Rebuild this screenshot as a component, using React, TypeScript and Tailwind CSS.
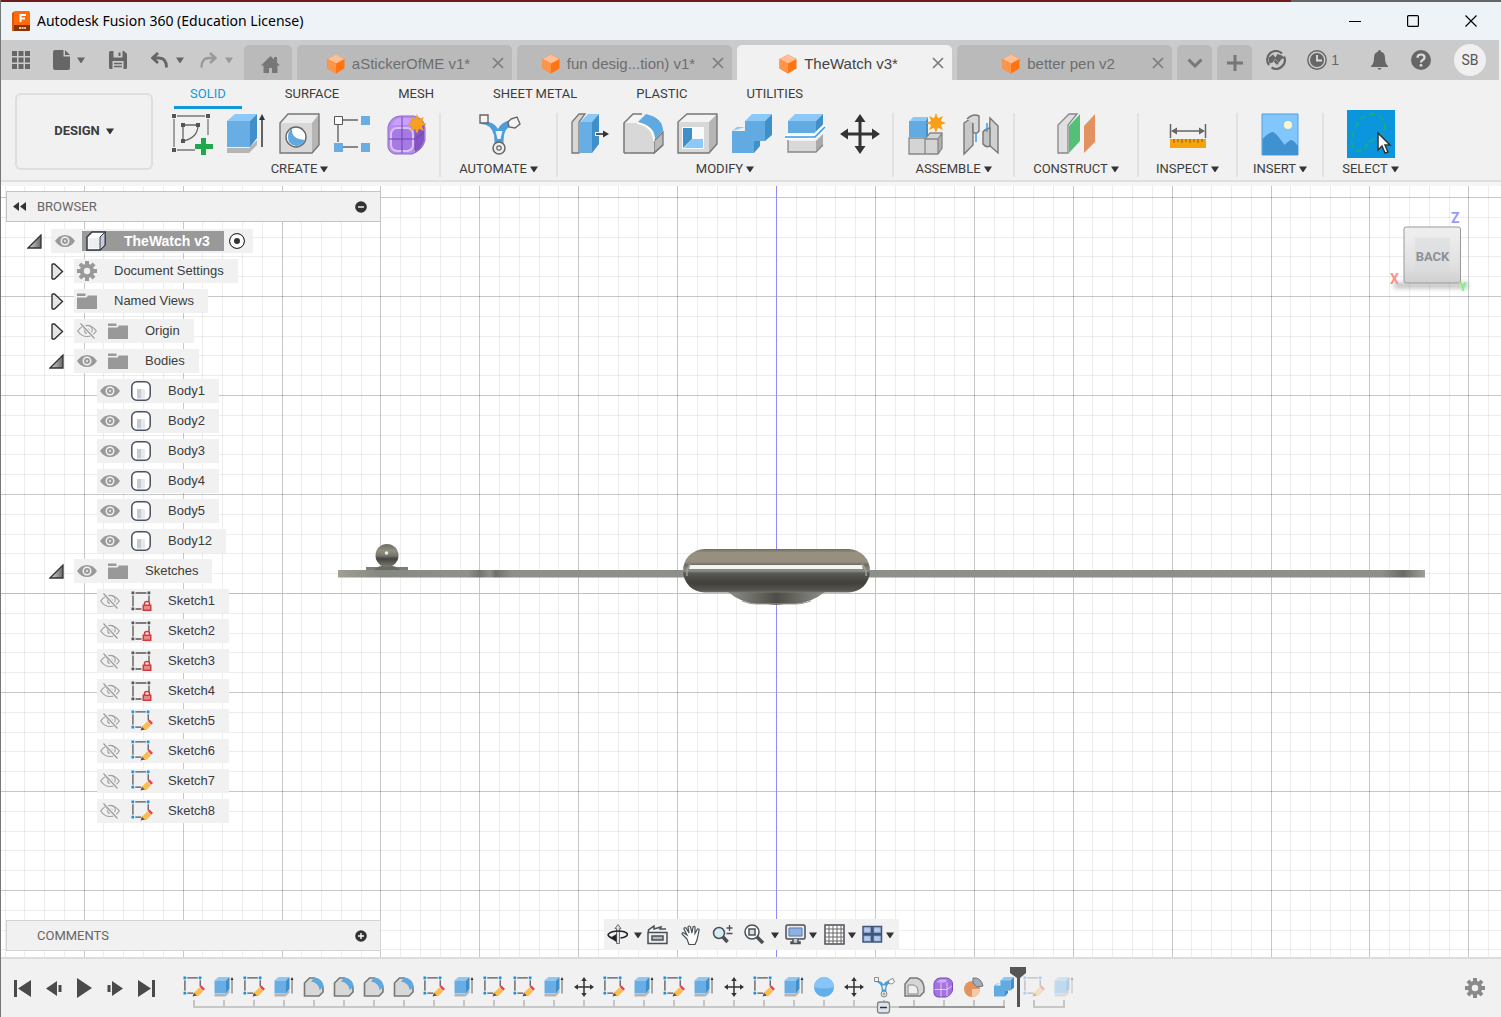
import React from "react";

type Kids = { children?: React.ReactNode };

function Svg({ w = 20, h = w, vb, className = "", children }: Kids & { w?: number; h?: number; vb?: string; className?: string }) {
  return (
    <svg width={w} height={h} viewBox={vb ?? `0 0 ${w} ${h}`} fill="none" className={`shrink-0 ${className}`} aria-hidden="true">
      {children}
    </svg>
  );
}

const Caret = ({ className = "text-[#333]" }: { className?: string }) => (
  <Svg w={8} h={8} className={className}>
    <path d="M0 1.500h8L4.400 7h-.8z" fill="currentColor" />
  </Svg>
);

/* ---------- title and tab bar ---------- */

const Logo = () => (
  <Svg w={18} h={20}>
    <path d="M0 2 2.500 0V20H0z" fill="#d85a10" />
    <rect x="2" width="16" height="20" rx="1.500" fill="#ff6b0b" />
    <path d="M2 14h16v4.500a1.500 1.500 0 0 1-1.500 1.500H2z" fill="#8a3200" />
    <path d="M8.500 11V4h5.500M8.500 7.500h4.500" stroke="#fff" strokeWidth="2" />
    <path d="M7 17h7" stroke="#e8c8b4" strokeWidth="2" strokeDasharray="2 .6" />
  </Svg>
);

const Cube = () => (
  <Svg w={18} h={20}>
    <path d="M9 .5 17.500 5v9.500L9 19.500.5 14.500V5z" fill="#ff7410" />
    <path d="M9 .5 17.500 5 9 9.500.5 5z" fill="#ffbe94" />
    <path d="M.5 5 9 9.500v10L.5 14.500z" fill="#ff954a" />
  </Svg>
);

const Cross = () => (
  <Svg w={12}>
    <path d="M1 1l10 10M11 1 1 11" stroke="#7a7a7a" strokeWidth="1.600" />
  </Svg>
);

function DocTab({ name, active }: { name: string; active?: boolean }) {
  return (
    <div className={`flex h-[35px] max-w-[215px] flex-1 items-center rounded-t-[5px] ${active ? "bg-[#f1f1f1] text-[#444]" : "bg-[#bababa] text-[#6e6e6e]"}`}>
      <button className="flex h-full flex-1 items-center justify-center gap-[7px] overflow-hidden pl-4 pt-[2px] text-[15px] leading-5 whitespace-nowrap">
        <Cube />
        {name}
      </button>
      <button aria-label={`Close ${name}`} className="flex w-7 justify-center">
        <Cross />
      </button>
    </div>
  );
}

function TitleBar() {
  return (
    <header className="flex h-[38px] items-center bg-[#eef3f8] pr-[1px] pl-[11px]">
      <Logo />
      <h1 className="ml-[7px] flex-1 font-['Noto_Sans',sans-serif] text-[14px] leading-5 text-black">Autodesk Fusion 360 (Education License)</h1>
      <button aria-label="Minimize" className="flex w-[58px] justify-center"><Svg w={12}><path d="M0 6.500h12" stroke="#000" /></Svg></button>
      <button aria-label="Maximize" className="flex w-[58px] justify-center"><Svg w={12}><rect x=".6" y=".6" width="10.800" height="10.800" rx="1" stroke="#000" strokeWidth="1.200" /></Svg></button>
      <button aria-label="Close" className="flex w-[58px] justify-center"><Svg w={12}><path d="M.5.5l11 11m0-11-11 11" stroke="#000" strokeWidth="1.200" /></Svg></button>
    </header>
  );
}

function TabBar() {
  return (
    <nav aria-label="Documents" className="mr-[2px] flex h-10 bg-[#cbcbcb] text-[#666]">
      <div className="flex w-[243px] shrink-0 items-center pl-[11px]">
        <button aria-label="Data panel"><Svg w={18}>
          {[0, 6.500, 13].map((x) => [0, 6.500, 13].map((y) => <rect key={`${x}-${y}`} x={x} y={y} width="5" height="5" fill="#666" />))}
        </Svg></button>
        <button aria-label="File" className="ml-[23px] flex items-center gap-[7px]">
          <Svg w={17} h={20}><path d="M0 2Q0 0 2 0h8.500v6.500H17V18q0 2-2 2H2q-2 0-2-2zM12 0l5 5h-5z" fill="#666" /></Svg>
          <Caret className="text-[#666]" />
        </button>
        <button aria-label="Save" className="ml-[24px]">
          <Svg w={18}><path d="M0 1.500Q0 0 1.500 0H15l3 3v13.500q0 1.500-1.500 1.500h-15Q0 18 0 16.500z" fill="#666" /><path d="M4.500 0h9v6.500h-9zM3.500 10h11v8h-11z" fill="#cbcbcb" /><path d="M9.500 1.500h2V5h-2z" fill="#666" /><path d="M5 12.500h8M5 15.500h8" stroke="#666" strokeWidth="1.500" /></Svg>
        </button>
        <button aria-label="Undo" className="ml-[24px] flex items-center gap-[7px]">
          <Svg w={18} h={16}><path d="M7 1 1.500 6 7 11M2 6h6q7.500 0 7.500 9.500" stroke="#666" strokeWidth="2.800" /></Svg>
          <Caret className="text-[#666]" />
        </button>
        <button aria-label="Redo" className="ml-[15px] flex items-center gap-[8px]">
          <Svg w={18} h={16}><path d="M11 1l5.500 5-5.500 5M16 6h-6q-7.500 0-7.500 9.500" stroke="#999" strokeWidth="2.400" /></Svg>
          <Caret className="text-[#999]" />
        </button>
      </div>
      <div className="flex min-w-0 flex-1 items-end gap-[5px]">
        <button aria-label="Home" className="flex h-[35px] w-12 items-center justify-center rounded-t-[5px] bg-[#bababa] pl-1 pt-1">
          <Svg w={19} h={18}><path d="M9.500 0 13 3.500V1h3v5.500L19 9.500h-2.500V17H11v-5H8v5H2.500V9.500H0z" fill="#777" /></Svg>
        </button>
        <DocTab name="aStickerOfME v1*" />
        <DocTab name="fun desig...tion) v1*" />
        <DocTab name="TheWatch v3*" active />
        <DocTab name="better pen v2" />
        <button aria-label="More tabs" className="flex h-[35px] w-[35px] items-center justify-center rounded-t-[5px] bg-[#bababa]">
          <Svg w={16} h={10}><path d="M1.500 1.500 8 8l6.500-6.500" stroke="#777" strokeWidth="3" /></Svg>
        </button>
        <button aria-label="New tab" className="flex h-[35px] w-[35px] items-center justify-center rounded-t-[5px] bg-[#bababa]">
          <Svg w={16}><path d="M8 0v16M0 8h16" stroke="#777" strokeWidth="3" /></Svg>
        </button>
      </div>
      <div className="flex shrink-0 items-center pr-[13px]">
        <button aria-label="Extensions">
          <Svg w={20}><path d="M3 15A8.700 8.700 0 0 1 16 3.500M18 6.500A8.700 8.700 0 0 1 5.500 17.500" stroke="#666" strokeWidth="2.200" /><path d="M2.500 8 7 4.500l2.500 3 2-3.500L16 5.500 18.500 8l-3 1-2.500 3.500L9 9 6.500 12.500l-3 1z" fill="#666" /><path d="M8.500 10.500 12 14" stroke="#666" strokeWidth="2.500" /></Svg>
        </button>
        <button aria-label="Job status" className="ml-[21px] flex items-center gap-1 text-[14px] leading-5 text-[#666]">
          <Svg w={20}><circle cx="10" cy="10" r="9.200" stroke="#666" strokeWidth="1.400" /><circle cx="10" cy="10" r="7" fill="#666" /><path d="M10 5v5.500h5" stroke="#ddd" strokeWidth="1.800" /></Svg>
          1
        </button>
        <button aria-label="Notifications" className="ml-[32px]">
          <Svg w={17} h={20}><path d="M8.500 0Q10 0 10 1.800q4 1 4 6.200 0 6 3 8v1H0v-1q3-2 3-8 0-5.200 4-6.200Q7 0 8.500 0zM6.500 18h4q-.5 1.800-2 1.800T6.500 18z" fill="#666" /></Svg>
        </button>
        <button aria-label="Help" className="ml-[23px]">
          <Svg w={20}><circle cx="10" cy="10" r="10" fill="#666" /><path d="M6.500 7.800Q6.500 4.500 10 4.500t3.500 3Q13.500 9 11.700 10 10 11 10 12.500" stroke="#ddd" strokeWidth="2.200" /><circle cx="10" cy="15.300" r="1.400" fill="#ddd" /></Svg>
        </button>
        <button className="ml-[23px] h-8 w-8 rounded-full bg-[#f0f0f0] font-[Roboto] text-[14px] leading-5 text-[#555]">SB</button>
      </div>
    </nav>
  );
}

/* ---------- ribbon icons, drawn on a 44 x 44 box ---------- */

const Star = ({ x, y }: { x: number; y: number }) => (
  <path transform={`translate(${x} ${y})`} d="M0-10 2-4.800 7-7 4.800-2 10 0 4.800 2 7 7 2 4.800 0 10-2 4.800-7 7-4.800 2-10 0-4.800-2-7-7-2-4.800z" fill="#f9a01b" />
);

const SketchCreate = () => (
  <g>
    <path d="M7 4h28M4 7v28M7 38h18M38 7v16" stroke="#777" strokeWidth="1.300" />
    <path d="M13 13h15M13 13v16M28 13q0 13-15 16" stroke="#666" strokeWidth="1.300" />
    <path d="M2 2h4v4H2zM36 2h4v4h-4zM2 36h4v4H2zM11 11h4v4h-4zM26 11h4v4h-4zM11 27h4v4h-4z" fill="#555" />
    <path d="M31 26h5v6h7v5h-7v6h-5v-6h-6v-5h6z" fill="#22a84c" />
  </g>
);

const Extrude = () => (
  <g>
    <path d="M3 41v-5h22l8-8v5l-8 8z" fill="#b5b5b5" />
    <path d="M3 9 11 2h22l-7 7z" fill="#8cc8f8" />
    <path d="M3 9h23v26H3z" fill="#68aee4" />
    <path d="M26 9 33 2v24l-7 9z" fill="#3f8fcb" />
    <path d="M38 35V5" stroke="#333" strokeWidth="1.500" />
    <path d="M35 8l3-6 3 6z" fill="#333" />
  </g>
);

const Hole = () => (
  <g>
    <path d="M2 11 10 2h31l-7 9z" fill="#eee" />
    <path d="M34 11 41 2v31l-7 8z" fill="#b5b5b5" />
    <path d="M2 11h32v30H2z" fill="#d8d8d8" />
    <path d="M2 11 10 2h31v31l-7 8H2z" stroke="#777" strokeWidth="1.400" />
    <circle cx="18" cy="25" r="10" fill="#fff" stroke="#666" strokeWidth="1.400" />
    <path d="M14 17q-1 10 13 11-3 6-9 6-8-1-8-9 0-6 4-8z" fill="#5ea9e0" />
  </g>
);

const Pattern = () => (
  <g>
    <path d="M10 8h16M6 12v18M10 35h16" stroke="#666" strokeWidth="1.400" />
    <path d="M2.500 4.500h8v8h-8z" stroke="#555" fill="#fafafa" />
    <path d="M29 4h9v9h-9zM2 31h9v9H2zM29 31h9v9h-9z" fill="#68aee4" />
  </g>
);

const FormBody = () => (
  <g>
    <path d="M2 15Q4 5 14 4h14q11 3 11 12v12q-2 10-13 14H9q-7-2-7-8z" fill="#b78cf0" />
    <path d="M14 6h12l-4 7H6q2-6 8-7z" fill="#c9a0ff" />
    <path d="M30 15l8-5v18q-2 9-9 12z" fill="#8453c4" />
    <rect x="5" y="16" width="22" height="23" rx="6" fill="#a679e4" stroke="#d9c2fc" strokeWidth="2" />
    <path d="M16 5v36M3 27h26l9-7M29 14v24" stroke="#6f43aa" />
    <path d="M2 15Q4 5 14 4h14q11 3 11 12v12q-2 10-13 14H9q-7-2-7-8z" stroke="#8d68bf" />
    <Star x={31} y={12} />
  </g>
);

const Automate = () => (
  <g>
    <path d="M4 10q12-2 17 7 4-8 14-9l3 5q-9 1-11 10l-1 13h-8l-1-13Q14 12 4 12z" fill="#4d9ddb" />
    <path d="M18.500 19h7l-2 8h-3z" fill="#e8f3fc" />
    <path d="M3 3h8v8H3z" fill="#f4f4f4" stroke="#666" strokeWidth="1.400" />
    <path d="M34 7l6-2 3 7-5 4-6-1-1-5z" fill="#f4f4f4" stroke="#666" strokeWidth="1.400" />
    <circle cx="22" cy="36" r="6" fill="#eee" stroke="#666" strokeWidth="1.500" />
    <circle cx="22" cy="36" r="2.200" stroke="#666" strokeWidth="1.200" />
  </g>
);

const PressPull = () => (
  <g>
    <path d="M4 41V10l7-8h6l-6 8v31z" fill="#d8d8d8" stroke="#777" strokeWidth="1.300" />
    <path d="M12 10 20 2h11l-7 8z" fill="#8cc8f8" />
    <path d="M12 10h12v31H12z" fill="#68aee4" />
    <path d="M24 10 31 2v30l-7 9z" fill="#3f8fcb" />
    <path d="M27 22h9" stroke="#f1f1f1" strokeWidth="4" />
    <path d="M28 22h8" stroke="#333" strokeWidth="1.600" />
    <path d="M35 18.500l6 3.500-6 3.500z" fill="#333" />
  </g>
);

const Fillet = () => (
  <g>
    <path d="M32 29l9-9v13l-9 8z" fill="#bbb" stroke="#777" strokeWidth="1.300" />
    <path d="M2 11 11 2h9l-6 9z" fill="#f5f5f5" />
    <path d="M2 41V11h12q16 2 18 18v12z" fill="#d8d8d8" />
    <path d="M2 41V11l9-9h9" stroke="#777" strokeWidth="1.500" />
    <path d="M2 41h30l9-8" stroke="#777" strokeWidth="1.300" />
    <path d="M16 10 24 2q17 4 17 17l-8 8q0-13-17-17z" fill="#5ea9e0" />
    <path d="M15 11q16 3 17 18" stroke="#fff" strokeWidth="1.500" />
  </g>
);

const Shell = () => (
  <g>
    <path d="M2 10 11 2h30l-8 8z" fill="#f3f3f3" />
    <path d="M33 10 41 2v30l-8 9z" fill="#b5b5b5" />
    <path d="M2 10h31v31H2z" fill="#d8d8d8" />
    <path d="M2 10 11 2h30v30l-8 9H2z" stroke="#777" strokeWidth="1.400" />
    <path d="M6 15h22v22H6z" fill="#fafafa" />
    <path d="M7 16h9v11l-9 9z" fill="#3f8fcb" />
    <path d="M16 27h11v9H8z" fill="#8cc8f8" />
  </g>
);

const Combine = () => (
  <g>
    <path d="M2 19 7 15h8V9l7-7h20l-7 7z" fill="#8cc8f8" />
    <path d="M2 19h13V9h20v20H24v12H2z" fill="#62abe2" />
    <path d="M35 9 42 2v21l-7 6zM24 29h6v5l-6 7z" fill="#3f8fcb" />
  </g>
);

const Split = () => (
  <g>
    <path d="M4 9 11 2h28l-7 7z" fill="#8cc8f8" />
    <path d="M4 9h28v12H4z" fill="#62abe2" />
    <path d="M32 9 39 2v12l-7 7z" fill="#3f8fcb" />
    <path d="M4 29h28v11H4z" fill="#d8d8d8" />
    <path d="M32 29l7-7v11l-7 7z" fill="#aaa" />
    <path d="M4 28v12h28l7-7" stroke="#888" strokeWidth="1.300" />
    <path d="M1 25h29L41 14" stroke="#fff" strokeWidth="5" />
    <path d="M1 25h30L41 15" stroke="#3d9be8" strokeWidth="1.700" />
  </g>
);

const Move = () => (
  <g>
    <path d="M22 8v28M8 22h28" stroke="#333" strokeWidth="3" />
    <path d="M22 2l5.500 8h-11zM22 42l5.500-8h-11zM2 22l8-5.500v11zM42 22l-8-5.500v11z" fill="#333" />
  </g>
);

const NewComponent = () => (
  <g>
    <path d="M4 26h16l4-5h13v15l-5 6H4z" fill="#d4d4d4" />
    <path d="M33 27l4-5v14l-4 5z" fill="#b0b0b0" />
    <path d="M4 42V26h16v16zM20 27l5-6h12v15l-4 6H20M20 27h13v15M33 27l4-6" stroke="#888" strokeWidth="1.300" />
    <path d="M4 10 8 5h15l-2 5z" fill="#8cc8f8" />
    <path d="M4 9h17v16H4z" fill="#62abe2" />
    <path d="M21 9l2-4v18l-2 2z" fill="#3f8fcb" />
    <Star x={31} y={11} />
  </g>
);

const Joint = () => (
  <g stroke="#777" strokeWidth="1.400">
    <path d="M5 11 14 5v28l-9 9z" fill="#c8c8c8" />
    <path d="M8 7q6-6 12-3v15q-3 4-6 1V11" fill="#d8d8d8" />
    <path d="M31 6l8 8v27L30 33z" fill="#d0d0d0" />
    <path d="M31 16q-5 1-7 4v12q3 4 7 2z" fill="#c4c4c4" />
    <path d="M17 21v9M28 11v9" stroke="#3d9be8" strokeWidth="1.500" />
  </g>
);

const Construct = () => (
  <g>
    <path d="M4 41V13L15 2h8L14 13v28z" fill="#e0e0e0" stroke="#888" strokeWidth="1.300" />
    <path d="M15 14 26 2v27L15 41z" fill="#55bf78" />
    <path d="M30 14 41 2v28L30 41z" fill="#e3925f" />
  </g>
);

const Measure = () => (
  <g>
    <path d="M4.500 12v14M39.500 12v14M8 19h28" stroke="#666" strokeWidth="1.500" />
    <path d="M5 19l6-3.500v7zM39 19l-6-3.500v7z" fill="#666" />
    <path d="M4 27h36v9H4z" fill="#f7a30c" />
    <path d="M8 27v4M12 27v3M16 27v4M20 27v3M24 27v4M28 27v3M32 27v4M36 27v3" stroke="#8a5a00" />
  </g>
);

const InsertImage = () => (
  <g>
    <path d="M4 2h36v41H4z" fill="#82c6fb" stroke="#4fa0de" />
    <circle cx="30" cy="13" r="4" fill="#fdf7cb" />
    <path d="M4.500 27q7-7 10-7t12 13q5-5 7-5t6.500 6v9H4.500z" fill="#3f92cf" />
  </g>
);

const SelectTool = () => (
  <Svg w={48}>
    <path d="M0 0h48v48H0z" fill="#0a95dc" />
    <path d="M22 32Q32 27 36 23 42 10 29 5 19 1 10 14 2 30 6 38 14 47 22 32z" stroke="#19b36b" strokeWidth="1.500" strokeDasharray="6 4" />
    <path d="M31 23v17l4-4 3 7 3-1-3-7h5z" fill="#fff" stroke="#333" strokeWidth="1.500" />
  </Svg>
);

type Tool = { label: string; icon: React.ReactNode };

function Group({ name, tools, className }: { name: string; tools: Tool[]; className: string }) {
  return (
    <section aria-label={name} className={`flex h-[64px] flex-col items-center border-r-2 border-[#e2e2e2] last:border-r-0 ${className}`}>
      <div className="-mt-[3px] flex h-12 shrink-0 items-center gap-[10px]">
        {tools.map((t) => (
          <button key={t.label} aria-label={t.label}>
            {t.label === "Select" ? t.icon : <Svg w={44}>{t.icon}</Svg>}
          </button>
        ))}
      </div>
      <button className="mt-[1px] flex shrink-0 items-center gap-[3px] text-[13px] leading-5">
        {name}
        <Caret />
      </button>
    </section>
  );
}

const ribbonTabs = ["SOLID", "SURFACE", "MESH", "SHEET METAL", "PLASTIC", "UTILITIES"];

function Ribbon() {
  return (
    <div className="flex border-b-4 border-[#f5f5f5] bg-[#f1f1f1] font-[Roboto] text-[#3c3c3c]">
      <div className="flex flex-1 border-b-2 border-[#dfdfdf] pb-[3px]">
        <button className="mt-[13px] ml-[14px] flex h-[77px] w-[138px] items-center justify-center gap-[6px] rounded-md border-2 border-[#dedede] pb-[2px] text-[13px] leading-5 font-bold">
          DESIGN
          <Caret />
        </button>
        <div className="ml-[7px]">
          <div role="tablist" className="flex gap-[27px] pl-[14px]">
            {ribbonTabs.map((t, i) => (
              <button
                key={t}
                role="tab"
                aria-selected={i === 0}
                className={`h-[29px] border-b-[3px] px-4 pt-[2px] text-[13px] leading-5 ${i === 0 ? "border-[#1299dc] text-[#1299dc]" : "border-transparent"}`}
              >
                {t}
              </button>
            ))}
          </div>
          <div className="mt-1 flex">
            <Group name="CREATE" className="w-[281px]" tools={[
              { label: "Create sketch", icon: <SketchCreate /> },
              { label: "Extrude", icon: <Extrude /> },
              { label: "Hole", icon: <Hole /> },
              { label: "Pattern", icon: <Pattern /> },
              { label: "Create form", icon: <FormBody /> },
            ]} />
            <Group name="AUTOMATE" className="w-[117px]" tools={[{ label: "Automated modeling", icon: <Automate /> }]} />
            <Group name="MODIFY" className="w-[336px]" tools={[
              { label: "Press pull", icon: <PressPull /> },
              { label: "Fillet", icon: <Fillet /> },
              { label: "Shell", icon: <Shell /> },
              { label: "Combine", icon: <Combine /> },
              { label: "Split body", icon: <Split /> },
              { label: "Move", icon: <Move /> },
            ]} />
            <Group name="ASSEMBLE" className="w-[121px]" tools={[
              { label: "New component", icon: <NewComponent /> },
              { label: "Joint", icon: <Joint /> },
            ]} />
            <Group name="CONSTRUCT" className="w-[124px]" tools={[{ label: "Offset plane", icon: <Construct /> }]} />
            <Group name="INSPECT" className="w-[99px]" tools={[{ label: "Measure", icon: <Measure /> }]} />
            <Group name="INSERT" className="w-[86px]" tools={[{ label: "Insert image", icon: <InsertImage /> }]} />
            <Group name="SELECT" className="w-[93px]" tools={[{ label: "Select", icon: <SelectTool /> }]} />
          </div>
        </div>
      </div>
    </div>
  );
}

/* ---------- canvas drawing ---------- */

function Model() {
  const xs = Array.from({ length: 77 }, (_, i) => i - 40);
  const ys = Array.from({ length: 42 }, (_, i) => i - 22);
  return (
    <svg className="absolute inset-0 h-full w-full" viewBox="1 186 1500 771" preserveAspectRatio="xMidYMid slice" role="img" aria-label="Back view of the watch model">
      <defs>
        <linearGradient id="case" x1="0" y1="0" x2="0" y2="1">
          <stop offset="0" stopColor="#6d6a62" />
          <stop offset=".08" stopColor="#97907f" />
          <stop offset=".3" stopColor="#979082" />
          <stop offset=".36" stopColor="#6f6d68" />
          <stop offset=".5" stopColor="#8b8f8b" />
          <stop offset=".56" stopColor="#5a5954" />
          <stop offset=".78" stopColor="#403f39" />
          <stop offset=".95" stopColor="#57554e" />
          <stop offset="1" stopColor="#77766d" />
        </linearGradient>
        <linearGradient id="lens" x1="0" y1="0" x2="1" y2="0">
          <stop offset="0" stopColor="#8f8f88" />
          <stop offset=".5" stopColor="#4d4c48" />
          <stop offset="1" stopColor="#8f8f88" />
        </linearGradient>
        <linearGradient id="band" x1="0" y1="0" x2="1" y2="0">
          <stop offset="0" stopColor="#a19f96" />
          <stop offset=".04" stopColor="#858780" />
          <stop offset=".1" stopColor="#8d908a" />
          <stop offset=".12" stopColor="#8d908a" />
          <stop offset=".13" stopColor="#73746e" />
          <stop offset=".14" stopColor="#8d908a" />
          <stop offset=".145" stopColor="#6e6f69" />
          <stop offset=".16" stopColor="#8d908a" />
          <stop offset=".96" stopColor="#8d908a" />
          <stop offset=".98" stopColor="#6b6b66" />
          <stop offset="1" stopColor="#a19f96" />
        </linearGradient>
        <linearGradient id="knob" x1="0" y1="0" x2="0" y2="1">
          <stop offset="0" stopColor="#6f6c62" />
          <stop offset=".3" stopColor="#928e80" />
          <stop offset=".5" stopColor="#77766e" />
          <stop offset=".65" stopColor="#45443f" />
          <stop offset="1" stopColor="#7d7b72" />
        </linearGradient>
      </defs>
      <path d="M1 186h1500v771H1z" fill="#fff" />
      <g stroke="#000">
        {xs.map((k) => <path key={k} d={`M${Math.round(776 + k * 19.78) + 0.5} 186V957`} strokeOpacity={k % 5 === 0 ? 0.22 : 0.07} />)}
        {ys.map((k) => <path key={k} d={`M1 ${Math.round(593 + k * 19.8) + 0.5}H1501`} strokeOpacity={k % 5 === 0 ? 0.22 : 0.07} />)}
      </g>
      <path d="M1 593.500h1500" stroke="#f7a5a5" />
      <path d="M776.500 186v771" stroke="#8d8df5" />
      <path d="M338 570h1087v7.500H338z" fill="url(#band)" />
      <path d="M366 567h42v3h-42z" fill="#7c7d75" />
      <path d="M374 570q4-4 8-4h10q4 0 8 4z" fill="#696a62" />
      <circle cx="387" cy="555.500" r="11.500" fill="url(#knob)" />
      <circle cx="386.500" cy="553" r="1.800" fill="#eee" />
      <path d="M728 592h97q-13 10-29 12h-12q-8 2-16 0h-12q-16-2-28-12z" fill="url(#lens)" />
      <path d="M742 601q6 2.500 14 3h40q8-.5 15-3" stroke="#a3a196" strokeWidth="1.200" fill="none" />
      <rect x="683" y="549" width="187" height="43.500" rx="21.700" fill="url(#case)" />
      <path d="M690 565h172l1 4H689z" fill="#f4f4f2" />
      <path d="M690 564q-4 6-3 12M862 564q5 6 4 12" stroke="#a49e90" strokeWidth="1.500" fill="none" />
    </svg>
  );
}

function ViewCube() {
  return (
    <svg width="90" height="90" viewBox="1385 207 90 90" className="absolute top-[21px] right-[26px]" role="img" aria-label="View cube, back">
      <defs>
        <linearGradient id="cubeface" x1="0" y1="0" x2="0" y2="1"><stop offset="0" stopColor="#f0f0f0" /><stop offset=".7" stopColor="#e0e0e0" /><stop offset="1" stopColor="#cfcfcf" /></linearGradient>
        <filter id="shade" x="-20%" y="-200%" width="140%" height="500%"><feGaussianBlur stdDeviation="2.500" /></filter>
      </defs>
      <path d="M1394 283h74v5h-74z" fill="#888" opacity=".6" filter="url(#shade)" />
      <rect x="1404" y="227" width="56.500" height="56" rx="2" fill="url(#cubeface)" stroke="#999" />
      <path d="M1415 238h35v35h-35z" fill="#d5d9de" opacity=".5" />
      <text x="1432.500" y="261" textAnchor="middle" fontFamily="Roboto" fontWeight="700" fontSize="13" fill="#8d9197">BACK</text>
      <g fontFamily="Roboto" fontSize="14" fontWeight="700">
        <text x="1451" y="223" fill="#9a9af8">Z</text>
        <text x="1390" y="284" fill="#ff8f8f">X</text>
        <text x="1459" y="291" fill="#7df57d" fontSize="12">Y</text>
      </g>
    </svg>
  );
}

/* ---------- browser tree ---------- */

const Eye = () => (
  <Svg w={20} h={14}><path d="M0 7Q4 1 10 1t10 6q-4 6-10 6T0 7z" fill="#999" /><circle cx="10" cy="7" r="4.500" fill="#f1f1f1" /><circle cx="10" cy="7" r="3" fill="#999" /><circle cx="10" cy="7" r="1.200" fill="#ddd" /></Svg>
);
const EyeOff = () => (
  <Svg w={20} h={16}><path d="M.7 8Q4.500 2.500 10 2.500T19.300 8q-3.800 5.500-9.300 5.500T.7 8z" stroke="#a0a0a0" strokeWidth="1.200" /><path d="M13.500 10.500a4.500 4.500 0 1 0-7-5M12.300 8a2.300 2.300 0 1 0-2.300 2.300" stroke="#a0a0a0" strokeWidth="1.100" /><path d="M4 0l14 15.500" stroke="#f1f1f1" strokeWidth="3" /><path d="M3.500.5 17.500 15.500" stroke="#999" strokeWidth="1.100" /></Svg>
);
const Folder = () => (
  <Svg w={20} h={17}><path d="M0 4.500h9.500l1.500-2h9V16H0z" fill="#999" /><path d="M0 .5h8.500v2.500H0z" fill="#999" /></Svg>
);
const Gear = ({ fill = "#999" }: { fill?: string }) => (
  <Svg w={20}>
    <g stroke={fill} strokeWidth="4">{[0, 45, 90, 135].map((a) => <path key={a} d="M10 0v20" transform={`rotate(${a} 10 10)`} />)}</g>
    <circle cx="10" cy="10" r="7.200" fill={fill} /><circle cx="10" cy="10" r="3.200" fill="#f1f1f1" />
  </Svg>
);
const Body = () => (
  <Svg w={20}><rect x=".8" y=".8" width="18.400" height="18.400" rx="5" fill="#fff" stroke="#4a5160" strokeWidth="1.500" /><path d="M6 8h4.500v9.500H6z" fill="#c5cad3" /><path d="M10.500 8H14v9.500h-3.500z" fill="#e6e8ee" /></Svg>
);
const SketchBox = ({ dot }: { dot: string }) => (
  <g><path d="M2 4.500v11M4.500 2h11M18 4.500V11M4.500 18h6" stroke="#555" strokeWidth="1.300" /><path d="M.5.5h2.800v2.800H.5zM16.500.5h2.800v2.800h-2.800zM.5 16.500h2.800v2.800H.5z" fill={dot} /></g>
);
const SketchLocked = () => (
  <Svg w={22} h={20}><SketchBox dot="#555" /><path d="M13.500 14v-1.500q0-2 2.500-2t2.500 2V14" stroke="#d23a3a" strokeWidth="1.500" /><path d="M11.500 13.500h9V20h-9z" fill="#d23a3a" /><path d="M13 15h6v3.500h-6z" fill="#e78c8c" /></Svg>
);
const Pencil = () => (
  <g><path d="M10 21.500l1.500-4.500 3.500 3.500z" fill="#555" /><path d="M11.500 17.500l5.500-5.500 4 4-5.500 5.500z" fill="#fbbd4a" /><path d="M17.500 11.500l2-1.500 3.500 3.500-2 2z" fill="#f0404f" /></g>
);
const SketchEdit = () => (
  <Svg w={22} h={22} vb="0 0 23 23"><SketchBox dot="#1c8fe3" /><Pencil /></Svg>
);

type Node = { name: string; level: 1 | 2; arrow?: "open" | "closed"; eye?: "on" | "off"; icon: React.ReactNode };

const nodes: Node[] = [
  { name: "Document Settings", level: 1, arrow: "closed", icon: <Gear /> },
  { name: "Named Views", level: 1, arrow: "closed", icon: <Folder /> },
  { name: "Origin", level: 1, arrow: "closed", eye: "off", icon: <Folder /> },
  { name: "Bodies", level: 1, arrow: "open", eye: "on", icon: <Folder /> },
  ...["Body1", "Body2", "Body3", "Body4", "Body5", "Body12"].map((name): Node => ({ name, level: 2, eye: "on", icon: <Body /> })),
  { name: "Sketches", level: 1, arrow: "open", eye: "on", icon: <Folder /> },
  ...[1, 2, 3, 4].map((n): Node => ({ name: `Sketch${n}`, level: 2, eye: "off", icon: <SketchLocked /> })),
  ...[5, 6, 7, 8].map((n): Node => ({ name: `Sketch${n}`, level: 2, eye: "off", icon: <SketchEdit /> })),
];

const OpenArrow = () => (
  <Svg w={15}><defs><linearGradient id="open" x1="0" y1="0" x2="1" y2="0"><stop offset="0" stopColor="#ddd" /><stop offset="1" stopColor="#666" /></linearGradient></defs><path d="M14 1v13H1z" fill="url(#open)" stroke="#333" strokeWidth="1.300" /></Svg>
);
const ClosedArrow = () => (
  <Svg w={13} h={17}><path d="M1 1.500Q1 1 2 1h1.500l8 7.500-8 7.500H2q-1 0-1-.5z" fill="#e5e5e5" stroke="#333" strokeWidth="1.400" /></Svg>
);

function Tree() {
  return (
    <ul className="mt-[7px] flex flex-col gap-[6px] text-[13px] leading-5 text-[#3c3c3c]">
      <li className="flex h-6 items-center pl-[26px]">
        <button aria-label="Collapse TheWatch v3"><OpenArrow /></button>
        <div className="ml-[9px] flex h-6 items-center bg-[#f1f1f1] pr-2 pl-1">
          <button aria-label="Hide TheWatch v3"><Eye /></button>
          <button className="ml-[7px] flex h-5 items-center bg-[#999] pr-[14px] pl-1 text-[14px] font-bold text-white">
            <Svg w={20}><path d="M1 6 6 1h13v13l-5 5H1z" fill="#fff" stroke="#333a48" strokeWidth="1.500" /><path d="M14 6l5-5v13l-5 5z" fill="#c9ccd4" stroke="#333a48" /><path d="M2.500 7h10.500v10.500H2.500z" fill="#eceef2" /></Svg>
            <span className="ml-[18px]">TheWatch v3</span>
          </button>
          <input type="radio" name="component" aria-label="Activate TheWatch v3" defaultChecked className="ml-[5px] h-4 w-4 appearance-none rounded-full border border-[#333] bg-[#333] shadow-[inset_0_0_0_4px_#fff]" />
        </div>
      </li>
      {nodes.map((n) => (
        <li key={n.name} className={`flex h-6 items-center ${n.level === 1 ? "pl-[48px]" : "pl-[96px]"}`}>
          {n.arrow && (
            <button aria-label={`Toggle ${n.name}`} className="flex w-[25px] shrink-0">
              {n.arrow === "open" ? <OpenArrow /> : <span className="pl-[2px]"><ClosedArrow /></span>}
            </button>
          )}
          <div className="flex h-6 items-center gap-[11px] bg-[#f1f1f1] pr-[14px] pl-[3px]">
            {n.eye && <button aria-label={`Visibility of ${n.name}`}>{n.eye === "on" ? <Eye /> : <EyeOff />}</button>}
            <span className="flex w-5">{n.icon}</span>
            <span className="ml-[6px]">{n.name}</span>
          </div>
        </li>
      ))}
    </ul>
  );
}

/* ---------- navigation bar ---------- */

function NavBar() {
  const s = { stroke: "#4a5058", strokeWidth: 1.5 };
  return (
    <div role="toolbar" aria-label="Navigation" className="absolute bottom-[7px] left-1/2 flex h-[31px] w-[295px] -translate-x-[147px] items-center bg-[#f1f1f1] px-[3px]">
      <button aria-label="Orbit" className="flex items-center gap-[6px]"><Svg w={21}><path d="M9.500 4.500H8L11 .5l3 4h-1.500v15h-3z" fill="#ddd" stroke="#6a7078" /><path d="M5 14Q0 12 1.500 10q3-3 10-3t9 3q0 3-7 4" stroke="#222" strokeWidth="1.600" /><path d="M9.500 10v8L3 14z" fill="#222" /></Svg><Caret /></button>
      <button aria-label="Look at" className="ml-[5px]"><Svg w={22} h={20}><path d="M1 7.500h19v11H1z" fill="#eee" {...s} /><path d="M5 11h11v4H5z" fill="#bbb" {...s} /><path d="M1.500 7V5L7 1v3l7-2-1 2h6" {...s} /></Svg></button>
      <button aria-label="Pan" className="ml-[12px]"><Svg w={20}><path d="M6 14 1 9q0-2 2-1l3 2-3-6q0-2 2-1l3 5-1-6q1-2 2.500 0L11 8l1-6q1.500-1.500 2 0v6.500L16.500 4q2-.5 1.500 1.500L16 15l-2 4.500H8z" fill="#fff" stroke="#4a5058" strokeWidth="1.200" /></Svg></button>
      <button aria-label="Zoom" className="ml-[11px]"><Svg w={21}><circle cx="7" cy="9" r="5.500" fill="#d5ecf0" {...s} /><path d="M11 13l4.500 5" stroke="#4a5058" strokeWidth="3.500" /><path d="M17.500 1v6M14.500 4h6M14.500 9.500h6" stroke="#4a5058" strokeWidth="1.300" /></Svg></button>
      <button aria-label="Fit" className="ml-[11px] flex items-center gap-[6px]"><Svg w={21}><circle cx="8" cy="8" r="7" fill="#fafafa" {...s} /><path d="M5 5h6v6H5z" fill="#ddd" {...s} /><path d="M13 13l6 6" stroke="#4a5058" strokeWidth="3.500" /></Svg><Caret /></button>
      <button aria-label="Display settings" className="ml-[6px] flex items-center gap-[3px]"><Svg w={21}><rect x="1" y="1" width="19" height="14" rx="1.500" fill="#e8e8e8" {...s} /><path d="M4 4h13v8H4z" fill="#8db1e0" stroke="#5a7fb0" /><path d="M8 15v3H6v1.500h9V18h-2v-3" fill="#ccc" {...s} /></Svg><Caret /></button>
      <button aria-label="Grid and snaps" className="ml-[7px] flex items-center gap-[3px]"><Svg w={21}><path d="M1 1h19v19H1z" fill="#fff" {...s} /><path d="M5 1v19M9 1v19M13 1v19M17 1v19M1 5h19M1 9h19M1 13h19M1 17h19" stroke="#666" /></Svg><Caret /></button>
      <button aria-label="Viewports" className="ml-[6px] flex items-center gap-[3px]"><Svg w={21}><path d="M1 2.500h8.500v7H1zM11 2.500h8.500v7H11zM1 11h8.500v7H1zM11 11h8.500v7H11z" fill="#9fb9e0" stroke="#44557a" strokeWidth="1.500" /><path d="M3.500 5h3.500v2H3.500zM13.500 5H17v2h-3.500zM3.500 13.500h3.500v2H3.500zM13.500 13.500H17v2h-3.500z" stroke="#c5d5ee" /></Svg><Caret /></button>
    </div>
  );
}

const RoundMark = ({ plus }: { plus?: boolean }) => (
  <Svg w={12}><circle cx="6" cy="6" r="5.800" fill="#333" /><path d={plus ? "M3 6h6M6 3v6" : "M3 6h6"} stroke="#fff" strokeWidth="1.400" /></Svg>
);

/* ---------- timeline ---------- */

const big = (icon: React.ReactNode) => <Svg w={22} vb="0 0 44 44">{icon}</Svg>;

const features: Record<string, React.ReactNode> = {
  sketch: <SketchEdit />,
  extrude: big(<Extrude />),
  fillet: <Svg w={22}><path d="M1.500 20V7l5-5H11q9 2 9 11v3l-4 4z" fill="#d8d8d8" stroke="#777" strokeWidth="1.600" /><path d="M8 5.500 11.500 1.500q9 1.500 9 9.500l-4 3Q16 7 8 5.500z" fill="#5ea9e0" /></Svg>,
  move: big(<Move />),
  automate: big(<Automate />),
  form: big(<g><path d="M2 15Q4 5 14 4h14q11 3 11 12v12q-2 10-13 14H9q-7-2-7-8z" fill="#a473e0" stroke="#7749b4" strokeWidth="2" /><path d="M14 7h14l-3 6H7z" fill="#cfb0fb" /><path d="M16 14v27M3 27h25l10-7M28 13v27" stroke="#e0ccfb" strokeWidth="2" /></g>),
  combine: big(<Combine />),
  sphere: <Svg w={22}><circle cx="11" cy="11" r="10" fill="#62aee8" /><path d="M1 11a10 10 0 0 1 20 0q-10 3-20 0z" fill="#86c5f6" /></Svg>,
  base: <Svg w={22}><path d="M2 20V8l5-6h7q6 2 7 9v5l-4 4z" fill="#d5d5d5" stroke="#777" strokeWidth="1.500" /><path d="M5 18V9h6q4 1 4 6v3z" fill="#eee" stroke="#888" /></Svg>,
  revolve: <Svg w={22}><circle cx="9" cy="13" r="8" fill="#e5935c" /><path d="M9 13h8a8 8 0 0 1-8 8z" fill="#f7c9a8" /><path d="M10 2q8-1 10 8l-6 1-4-4z" fill="#a7adb8" stroke="#6d7480" /></Svg>,
};

const order = "sketch extrude sketch extrude fillet fillet fillet fillet sketch extrude sketch sketch extrude move sketch extrude sketch extrude move sketch extrude sphere move automate base form revolve combine sketch extrude".split(" ");

function Timeline() {
  const p = "text-[#4a4a4a]";
  return (
    <footer className="flex h-[60px] items-center border-t-2 border-[#dcdcdc] bg-[#f1f1f1]">
      <div className="ml-[13px] flex shrink-0 items-center gap-[14px]">
        <button aria-label="Go to start"><Svg w={17} className={p}><path d="M0 0h3v17H0zM17 0v17L4 8.500z" fill="currentColor" /></Svg></button>
        <button aria-label="Step back"><Svg w={17} className={p}><path d="M12 1v15L1 8.500zM13.500 5h3v7h-3z" fill="currentColor" /></Svg></button>
        <button aria-label="Play"><Svg w={17} h={20} className={p}><path d="M1 0l15 10L1 20z" fill="currentColor" /></Svg></button>
        <button aria-label="Step forward"><Svg w={17} className={p}><path d="M5 1v15l11-7.500zM.5 5h3v7h-3z" fill="currentColor" /></Svg></button>
        <button aria-label="Go to end"><Svg w={17} className={p}><path d="M14 0h3v17h-3zM0 0v17l13-8.500z" fill="currentColor" /></Svg></button>
      </div>
      <ol className="relative ml-[24px] flex shrink-0 items-start pt-2">
        {order.map((f, i) => (
          <li key={i} className="flex w-[30px] flex-col items-center">
            <button aria-label={`Feature ${i + 1}: ${f}`} className={`flex h-6 items-center ${i > 27 ? "opacity-35" : ""}`}>{features[f]}</button>
            <Svg w={30} h={10} className="overflow-visible">
              <path d="M15 1v7" stroke="#c4c4c4" strokeWidth="2" />
              <path
                d={i === 0 || i === 28 ? "M14 8h16" : i === 29 || i === 27 ? "M0 8h16" : "M0 8h30"}
                stroke={i > 23 && i < 28 ? "#999" : "#c8c8c8"}
                strokeWidth="2"
              />
              {i === 23 && <g><rect x="8.500" y="3" width="12" height="11" rx="2.500" fill="#dfe3ea" stroke="#7c8492" strokeWidth="1.300" /><path d="M11 8.500h7" stroke="#333" strokeWidth="1.500" /></g>}
            </Svg>
          </li>
        ))}
        <li className="absolute top-0 left-[831px]">
          <Svg w={16} h={40}><path d="M0 0h16v6l-6 5v29H7V11L0 6z" fill="#555" /></Svg>
        </li>
      </ol>
      <button aria-label="Timeline settings" className="mr-4 ml-auto"><Gear fill="#8a8a8a" /></button>
    </footer>
  );
}

export default function App() {
  return (
    <div className="flex min-h-screen flex-col border-l border-[#777] bg-[#f1f1f1] font-['Liberation_Sans',Arial,sans-serif]">
      <div className="flex h-[2px] bg-[#666]"><div className="w-[86%] bg-[#701c1c]" /></div>
      <TitleBar />
      <TabBar />
      <Ribbon />
      <main className="relative flex flex-1 flex-col overflow-hidden">
        <Model />
        <ViewCube />
        <div className="relative flex w-[380px] flex-1 flex-col pt-[5px] pb-[6px]">
          <div className="ml-[5px] flex h-[31px] items-center border border-[#c4c4c4] bg-[#f1f1f1] pr-[13px] pl-[6px]">
            <button aria-label="Collapse browser"><Svg w={13} h={9}><path d="M6 0v9L0 4.500zM13 0v9L7 4.500z" fill="#333" /></Svg></button>
            <h2 className="ml-[11px] flex-1 font-[Roboto] text-[13px] leading-5 text-[#666]">BROWSER</h2>
            <button aria-label="Minimize browser"><RoundMark /></button>
          </div>
          <Tree />
          <div className="mt-auto ml-[5px] flex h-[31px] items-center border border-[#d4d4d4] bg-[#f1f1f1] pr-[13px] pl-[30px]">
            <h2 className="flex-1 font-[Roboto] text-[13px] leading-5 text-[#666]">COMMENTS</h2>
            <button aria-label="Add comment"><RoundMark plus /></button>
          </div>
        </div>
        <NavBar />
      </main>
      <Timeline />
    </div>
  );
}
